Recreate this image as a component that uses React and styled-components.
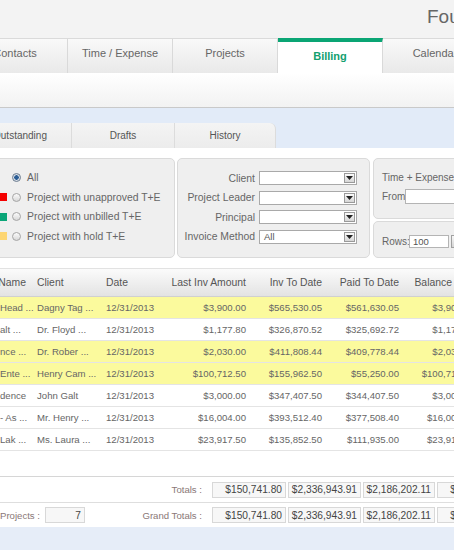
import React from "react";
import styled, { createGlobalStyle } from "styled-components";

const mainTabs = ["Contacts", "Time / Expense", "Projects", "Billing", "Calendar", "Reports"];
const subTabs = ["Outstanding", "Drafts", "History"];

const statusFilters = [
  { label: "All", checked: true },
  { label: "Project with unapproved T+E", swatch: "#f40000" },
  { label: "Project with unbilled T+E", swatch: "#0ba678" },
  { label: "Project with hold T+E", swatch: "#fdd673" },
];

const selectFilters = [
  { label: "Client", value: "" },
  { label: "Project Leader", value: "" },
  { label: "Principal", value: "" },
  { label: "Invoice Method", value: "All" },
];

const rows = [
  { name: "Head ...", client: "Dagny Tag ...", last: "$3,900.00", inv: "$565,530.05", paid: "$561,630.05", balance: "$3,900.00", hold: true },
  { name: "alt ...", client: "Dr. Floyd ...", last: "$1,177.80", inv: "$326,870.52", paid: "$325,692.72", balance: "$1,177.80" },
  { name: "nce ...", client: "Dr. Rober ...", last: "$2,030.00", inv: "$411,808.44", paid: "$409,778.44", balance: "$2,030.00", hold: true },
  { name: "Ente ...", client: "Henry Cam ...", last: "$100,712.50", inv: "$155,962.50", paid: "$55,250.00", balance: "$100,712.50", hold: true },
  { name: "dence", client: "John Galt", last: "$3,000.00", inv: "$347,407.50", paid: "$344,407.50", balance: "$3,000.00" },
  { name: "- As ...", client: "Mr. Henry ...", last: "$16,004.00", inv: "$393,512.40", paid: "$377,508.40", balance: "$16,004.00" },
  { name: "Lak ...", client: "Ms. Laura ...", last: "$23,917.50", inv: "$135,852.50", paid: "$111,935.00", balance: "$23,917.50" },
];

const totals = ["$150,741.80", "$2,336,943.91", "$2,186,202.11", "$150,741.80"];
const boxWidths = [74, 73, 72, 74];

function Radio({ checked }) {
  return <RadioDot $checked={checked} />;
}

function Select({ value }) {
  return (
    <SelectBox>
      <SelectValue>{value}</SelectValue>
      <SelectArrow>
        <svg width="7" height="4" viewBox="0 0 7 4">
          <path d="M0 0h7L3.5 4z" fill="#222" />
        </svg>
      </SelectArrow>
    </SelectBox>
  );
}

function TotalsBoxes() {
  return totals.map((t, i) => (
    <TotalBox key={i} $width={boxWidths[i]}>
      {t}
    </TotalBox>
  ));
}

export default function App() {
  return (
    <Viewport>
      <GlobalStyle />
      <Canvas>
        <Header>
          <Title>Fourth Street</Title>
        </Header>

        <TabBar>
          {mainTabs.map((t) => (
            <Tab key={t} $active={t === "Billing"}>
              {t}
            </Tab>
          ))}
        </TabBar>
        <SubBar />

        <BlueBand>
          {subTabs.map((t, i) => (
            <SubTab key={t} $last={i === subTabs.length - 1}>
              {t}
            </SubTab>
          ))}
        </BlueBand>

        <Filters>
          <StatusPanel>
            {statusFilters.map((f) => (
              <StatusRow key={f.label}>
                <Swatch $color={f.swatch} />
                <Radio checked={f.checked} />
                <StatusLabel>{f.label}</StatusLabel>
              </StatusRow>
            ))}
          </StatusPanel>

          <SelectPanel>
            {selectFilters.map((f) => (
              <React.Fragment key={f.label}>
                <FieldLabel>{f.label}</FieldLabel>
                <Select value={f.value} />
              </React.Fragment>
            ))}
          </SelectPanel>

          <SideColumn>
            <DatePanel>
              <PanelTitle>Time + Expense Submitted</PanelTitle>
              <InlineField>
                <SmallLabel $width={23}>From</SmallLabel>
                <TextInput $width={120} />
              </InlineField>
            </DatePanel>
            <RowsPanel>
              <SmallLabel $width={27}>Rows:</SmallLabel>
              <TextInput $width={40} $height={13}>100</TextInput>
              <MiniButton />
            </RowsPanel>
          </SideColumn>
        </Filters>

        <Table>
          <HeadRow>
            <HeadCell>Project Name</HeadCell>
            <HeadCell>Client</HeadCell>
            <HeadCell>Date</HeadCell>
            <HeadCell $right>Last Inv Amount</HeadCell>
            <HeadCell $right>Inv To Date</HeadCell>
            <HeadCell $right>Paid To Date</HeadCell>
            <HeadCell $right $pad={27}>Balance</HeadCell>
            <HeadCell />
          </HeadRow>
          {rows.map((r, i) => (
            <BodyRow key={i} $hold={r.hold}>
              <NameCell>{r.name}</NameCell>
              <Cell>{r.client}</Cell>
              <Cell>12/31/2013</Cell>
              <Cell $right>{r.last}</Cell>
              <Cell $right>{r.inv}</Cell>
              <Cell $right>{r.paid}</Cell>
              <Cell $right>{r.balance}</Cell>
              <Cell />
            </BodyRow>
          ))}
        </Table>
        <TableSpacer />

        <TotalsArea>
          <TotalsRow>
            <TotalsLabel $width={239}>Totals :</TotalsLabel>
            <TotalsBoxes />
          </TotalsRow>
          <TotalsRow $last>
            <TotalsLabel $width={77}>Total Projects :</TotalsLabel>
            <CountBox $width={40}>7</CountBox>
            <TotalsLabel $width={117}>Grand Totals :</TotalsLabel>
            <TotalsBoxes />
          </TotalsRow>
        </TotalsArea>
        <FooterBand />
      </Canvas>
    </Viewport>
  );
}

const GlobalStyle = createGlobalStyle`
  html, body {
    margin: 0;
    padding: 0;
    background: #fff;
  }
  body {
    font-family: "Liberation Sans", Arial, sans-serif;
    color: #666;
    overflow: hidden;
  }
  * {
    box-sizing: border-box;
  }
`;

const Viewport = styled.div`
  width: 454px;
  height: 550px;
  overflow: hidden;
`;

const Canvas = styled.div`
  width: 640px;
  margin-left: -37px;
`;

const Header = styled.div`
  height: 38px;
  padding: 5px 0 0 464px;
  background: #f3f3f3;
`;

const Title = styled.div`
  font-size: 19px;
  line-height: 24px;
  color: #666;
  white-space: nowrap;
`;

const TabBar = styled.div`
  display: flex;
  height: 35px;
  background: #f3f3f3;
`;

const Tab = styled.div`
  display: flex;
  align-items: center;
  justify-content: center;
  width: 105px;
  height: 35px;
  padding-bottom: ${(p) => (p.$active ? "3px" : "6px")};
  border-top: ${(p) => (p.$active ? "4px solid #0aa574" : "1px solid #dadada")};
  border-right: 1px solid #d9d9d9;
  background: ${(p) => (p.$active ? "#fff" : "linear-gradient(#f9f9f9, #e9e9e9)")};
  color: ${(p) => (p.$active ? "#13a06f" : "#666")};
  font-weight: ${(p) => (p.$active ? "bold" : "normal")};
  font-size: 11px;
  white-space: nowrap;
`;

const SubBar = styled.div`
  height: 35px;
  background: linear-gradient(#fff, #f2f2f2);
  border-bottom: 1px solid #c9c9c9;
`;

const BlueBand = styled.div`
  display: flex;
  height: 40px;
  padding: 15px 0 0 6px;
  background: #e2ebf8;
`;

const SubTab = styled.div`
  display: flex;
  align-items: center;
  justify-content: center;
  width: ${(p) => (p.$last ? "101px" : "103px")};
  height: 25px;
  border-right: 1px solid #dcdcdc;
  border-top-right-radius: ${(p) => (p.$last ? "6px" : "0")};
  background: linear-gradient(#f4f4f4, #ececec);
  color: #555;
  font-size: 10px;
`;

const Filters = styled.div`
  display: flex;
  height: 100px;
  margin-top: 10px;
  padding-left: 6px;
`;

const Panel = styled.div`
  background: #efefef;
  border: 1px solid #dadada;
  border-radius: 5px;
`;

const StatusPanel = styled(Panel)`
  width: 206px;
  padding-top: 9px;
`;

const StatusRow = styled.div`
  display: flex;
  align-items: center;
  height: 19.5px;
`;

const Swatch = styled.span`
  width: 8px;
  height: 8px;
  margin-left: 29px;
  background: ${(p) => p.$color || "transparent"};
`;

const RadioDot = styled.span`
  width: 9px;
  height: 9px;
  margin-left: 5px;
  border: 1px solid ${(p) => (p.$checked ? "#6c7c90" : "#a5a5a5")};
  border-radius: 50%;
  background: ${(p) =>
    p.$checked
      ? "radial-gradient(circle, #2b5d95 0 2px, #d5dde6 2.5px)"
      : "linear-gradient(#fbfbfb, #d8d8d8)"};
`;

const StatusLabel = styled.span`
  margin-left: 6px;
  font-size: 10.4px;
  color: #666;
  white-space: nowrap;
`;

const SelectPanel = styled(Panel)`
  display: grid;
  grid-template-columns: 77px 98px;
  grid-auto-rows: 14px;
  column-gap: 4px;
  row-gap: 5.5px;
  align-content: start;
  width: 193px;
  margin-left: 2px;
  padding-top: 12px;
`;

const FieldLabel = styled.span`
  align-self: center;
  text-align: right;
  font-size: 10.4px;
  color: #666;
  white-space: nowrap;
`;

const SelectBox = styled.div`
  display: flex;
  align-items: center;
  height: 14px;
  padding: 0 1px 0 4px;
  background: #fff;
  border: 1px solid #a9a9a9;
`;

const SelectValue = styled.span`
  flex: 1;
  font-size: 9.5px;
  color: #555;
`;

const SelectArrow = styled.span`
  display: flex;
  align-items: center;
  justify-content: center;
  width: 11px;
  height: 10px;
  border: 1px solid #9a9a9a;
  background: linear-gradient(#fafafa, #d6d6d6);
`;

const SideColumn = styled.div`
  display: flex;
  flex-direction: column;
  gap: 2px;
  width: 170px;
  margin-left: 3px;
`;

const DatePanel = styled(Panel)`
  height: 61px;
  padding: 11px 0 0 8px;
`;

const PanelTitle = styled.div`
  font-size: 10px;
  line-height: 16px;
  color: #666;
  white-space: nowrap;
`;

const InlineField = styled.div`
  display: flex;
  align-items: center;
  margin-top: 3px;
`;

const SmallLabel = styled.span`
  width: ${(p) => p.$width}px;
  font-size: 10px;
  color: #666;
  white-space: nowrap;
`;

const TextInput = styled.div`
  display: flex;
  align-items: center;
  width: ${(p) => p.$width}px;
  height: ${(p) => p.$height || 15}px;
  padding-left: 3px;
  background: #fff;
  border: 1px solid #b4b4b4;
  font-size: 9.5px;
  color: #555;
`;

const RowsPanel = styled(Panel)`
  display: flex;
  align-items: center;
  flex: 1;
  padding: 4px 0 0 8px;
`;

const MiniButton = styled.span`
  width: 12px;
  height: 13px;
  margin-left: 2px;
  border: 1px solid #a0a0a0;
  background: linear-gradient(#f7f7f7, #d4d4d4);
`;

const Table = styled.div`
  margin-top: 10px;
`;

const columns = "70px 69px 51px 97px 76px 77px 76px 120px";

const HeadRow = styled.div`
  display: grid;
  grid-template-columns: ${columns};
  height: 29px;
  background: linear-gradient(#fbfbfb, #e3e3e3);
  border-top: 1px solid #e2e2e2;
  border-bottom: 1px solid #d0d0d0;
`;

const HeadCell = styled.div`
  display: flex;
  align-items: center;
  justify-content: ${(p) => (p.$right ? "flex-end" : "flex-start")};
  padding: ${(p) => (p.$right ? `0 ${p.$pad || 4}px 0 0` : "0 0 0 4px")};
  font-size: 10.4px;
  color: #555;
  white-space: nowrap;
  &:first-child {
    padding-left: 0;
  }
`;

const BodyRow = styled.div`
  display: grid;
  grid-template-columns: ${columns};
  height: 22px;
  background: ${(p) => (p.$hold ? "#fbfa9d" : "#fff")};
  border-bottom: 1px solid #e4e4e4;
`;

const Cell = styled.div`
  display: flex;
  align-items: center;
  justify-content: ${(p) => (p.$right ? "flex-end" : "flex-start")};
  padding: ${(p) => (p.$right ? "0 4px 0 0" : "0 0 0 4px")};
  font-size: 9.6px;
  color: #666;
  white-space: nowrap;
`;

const NameCell = styled(Cell)`
  padding-left: 37px;
`;

const TableSpacer = styled.div`
  height: 25px;
`;

const TotalsArea = styled.div`
  border-top: 1px solid #d6d6d6;
`;

const TotalsRow = styled.div`
  display: flex;
  align-items: center;
  height: ${(p) => (p.$last ? "24px" : "26px")};
  border-bottom: ${(p) => (p.$last ? "none" : "1px solid #dedede")};
`;

const TotalsLabel = styled.span`
  flex: none;
  width: ${(p) => p.$width}px;
  margin-right: 10px;
  text-align: right;
  font-size: 9.6px;
  color: #8a7777;
  white-space: nowrap;
`;

const TotalBox = styled.span`
  flex: none;
  display: flex;
  align-items: center;
  justify-content: flex-end;
  width: ${(p) => p.$width}px;
  height: 16px;
  margin-right: 2px;
  padding-right: 3px;
  background: #f7f7f7;
  border: 1px solid #d8d8d8;
  font-size: 10.2px;
  color: #444;
  white-space: nowrap;
  overflow: hidden;
`;

const CountBox = styled(TotalBox)`
  margin-left: -5px;
  margin-right: 0;
`;

const FooterBand = styled.div`
  height: 30px;
  background: #e6edf8;
`;
